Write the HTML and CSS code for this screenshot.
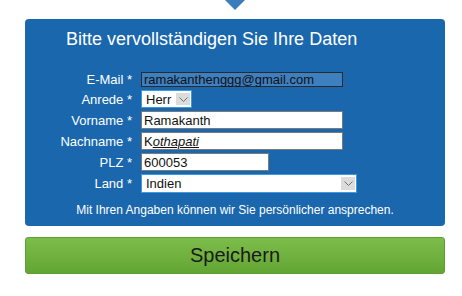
FILE: index.html
```html
<!DOCTYPE html>
<html>
<head>
    <title>Ihre Daten</title>
    <link rel="stylesheet" href="styles.css">
</head>
<body>
    <div class="page">
        <div class="pointer"></div>

        <div class="data-box">
            <h2 class="data-title">Bitte vervollständigen Sie Ihre Daten</h2>

            <div class="data-form">
                <label class="field-label">E-Mail *</label>
                <div class="field field-email">ramakanthenggg@gmail.com</div>

                <label class="field-label">Anrede *</label>
                <div class="field field-select field-anrede">
                    <span class="select-value">Herr</span>
                    <span class="select-arrow">
                        <svg width="9" height="5" viewBox="0 0 9 5"><path d="M0.5 0.5 L4.5 4.5 L8.5 0.5" fill="none" stroke="#6f6f6f" stroke-width="1"/></svg>
                    </span>
                </div>

                <label class="field-label">Vorname *</label>
                <div class="field field-text">Ramakanth</div>

                <label class="field-label">Nachname *</label>
                <div class="field field-text">K<span class="misspelled">othapati</span></div>

                <label class="field-label">PLZ *</label>
                <div class="field field-text field-plz">600053</div>

                <label class="field-label">Land *</label>
                <div class="field field-select field-land">
                    <span class="select-value">Indien</span>
                    <span class="select-arrow">
                        <svg width="9" height="5" viewBox="0 0 9 5"><path d="M0.5 0.5 L4.5 4.5 L8.5 0.5" fill="none" stroke="#6f6f6f" stroke-width="1"/></svg>
                    </span>
                </div>
            </div>

            <p class="data-note">Mit Ihren Angaben können wir Sie persönlicher ansprechen.</p>
        </div>

        <button class="save-button">Speichern</button>
    </div>
</body>
</html>
```

FILE: styles.css
```css
body {
    font-family: "Liberation Sans", Arial, sans-serif;
    background-color: #fff;
    margin: 0;
    padding: 0;
}

.page {
    width: 420px;
    margin-left: 25px;
}

/* small arrow above the box */
.pointer {
    width: 0;
    height: 0;
    margin: 0 auto;
    border-left: 10px solid transparent;
    border-right: 10px solid transparent;
    border-top: 10px solid #3b7cbd;
}

.data-box {
    margin-top: 9px;
    background-color: #1a67ad;
    border-radius: 4px;
    padding: 10px 0 9px 0;
    color: #fff;
}

.data-title {
    margin: 0 0 22px 41px;
    font-size: 18px;
    font-weight: normal;
    line-height: 21px;
}

.data-form {
    display: grid;
    grid-template-columns: 107px auto;
    column-gap: 9px;
    row-gap: 3px;
    justify-items: start;
    align-items: center;
}

.field-label {
    justify-self: end;
    font-size: 13px;
    line-height: 15px;
}

.field {
    box-sizing: border-box;
    font-size: 13px;
    color: #111;
    display: flex;
    align-items: center;
    white-space: nowrap;
    padding-left: 2px;
}

.field-email {
    width: 202px;
    height: 15px;
    background-color: #3e7fc0;
    border: 1px solid #2b2b2b;
    line-height: 13px;
}

.field-text {
    width: 202px;
    height: 18px;
    background-color: #fff;
    border: 1px solid #7a7a7a;
}

.field-plz {
    width: 128px;
}

.misspelled {
    font-style: italic;
    text-decoration: underline;
}

.field-select {
    background-color: #fff;
    border: 1px solid #3a9ae2;
    justify-content: space-between;
    padding: 2px 1px 2px 1px;
}

.field-anrede {
    width: 51px;
    height: 18px;
}

.field-land {
    width: 216px;
    height: 19px;
}

.select-value {
    padding-left: 3px;
}

.select-arrow {
    width: 14px;
    align-self: stretch;
    background-color: #dcdcdc;
    display: flex;
    align-items: center;
    justify-content: center;
}

.data-note {
    margin: 10px 0 0 0;
    text-align: center;
    font-size: 12px;
    line-height: 14px;
}

.save-button {
    display: block;
    width: 100%;
    height: 37px;
    margin-top: 11px;
    background: linear-gradient(#7dbd4a, #63a534);
    border: 1px solid #5e9d30;
    border-radius: 3px;
    font-family: "Liberation Sans", Arial, sans-serif;
    font-size: 20px;
    color: #1a1a1a;
    cursor: pointer;
}
```
